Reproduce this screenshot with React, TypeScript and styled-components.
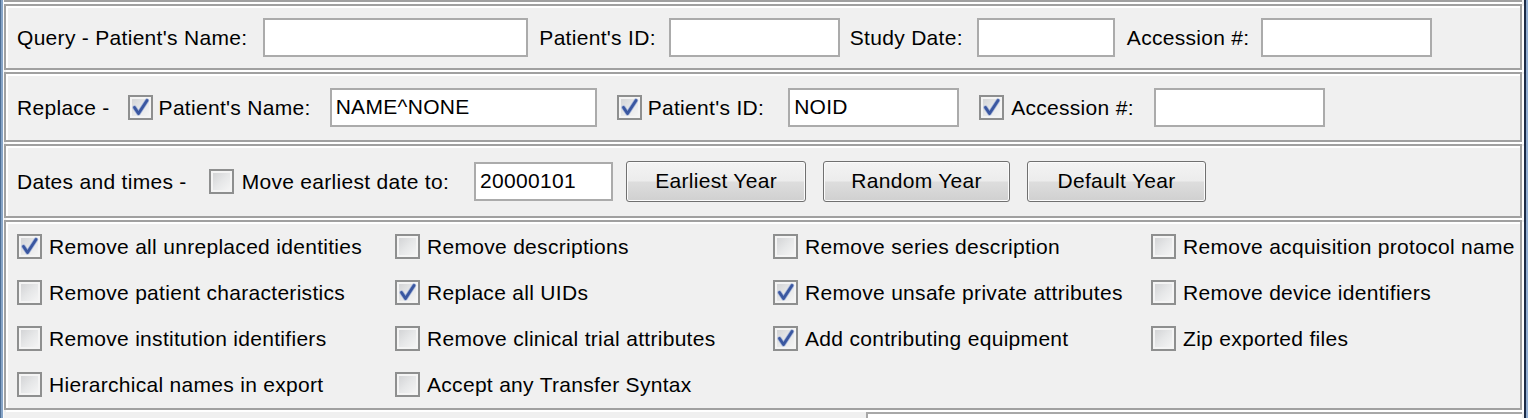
import styled, { createGlobalStyle } from 'styled-components';

const GlobalStyle = createGlobalStyle`
  html, body {
    margin: 0;
    padding: 0;
  }
  body {
    background: #f0f0f0;
    font-family: "Liberation Sans", Arial, sans-serif;
    font-size: 21px;
    letter-spacing: 0.3px;
    color: #000;
    height: 418px;
    overflow: hidden;
  }
`;

const Frame = styled.div`
  height: 418px;
  border-left: 1px solid #4f6e93;
  border-right: 2px solid #93afd2;
  box-sizing: border-box;
`;

const FrameInner = styled.div`
  height: 100%;
  border-left: 2px solid #86a4c7;
  border-right: 2px solid #1c2b46;
  box-sizing: border-box;
`;

const Content = styled.div`
  height: 100%;
  border-left: 1px solid #fbfbfb;
  padding-right: 2px;
  background: #f0f0f0;
  display: flex;
  flex-direction: column;
`;

const PanelTail = styled.div`
  height: 0;
  border-bottom: 2px solid #a0a0a0;
  box-shadow: 0 2px 0 #fff;
  margin-bottom: 2px;
`;

const Panel = styled.div<{ $h: number }>`
  box-sizing: border-box;
  height: ${(p) => p.$h}px;
  border: 2px solid #a0a0a0;
  box-shadow: inset 2px 2px 0 #fff, 2px 2px 0 #fff;
  margin-bottom: 2px;
  padding-left: 11px;
  display: flex;
  align-items: center;
  flex-shrink: 0;
`;

const Row = styled.div`
  display: flex;
  align-items: center;
  white-space: nowrap;
`;

const Label = styled.span<{ $ml?: number }>`
  margin-left: ${(p) => p.$ml ?? 0}px;
  line-height: 1;
`;

const Field = styled.input<{ $w: number; $ml?: number }>`
  box-sizing: border-box;
  width: ${(p) => p.$w}px;
  height: 39px;
  margin: 0 0 0 ${(p) => p.$ml ?? 0}px;
  border: 2px solid #ababab;
  background: #fff;
  padding: 0 4px;
  font: inherit;
  letter-spacing: inherit;
  color: #000;
  outline: none;
`;

const Button = styled.button<{ $w: number; $ml?: number }>`
  box-sizing: border-box;
  width: ${(p) => p.$w}px;
  height: 41px;
  margin: 0 0 0 ${(p) => p.$ml ?? 0}px;
  border: 1px solid #707070;
  border-radius: 3px;
  box-shadow: inset 0 0 0 1px #fbfbfb;
  background: linear-gradient(#f3f3f3 0%, #ececec 48%, #dddddd 52%, #d0d0d0 100%);
  font: inherit;
  letter-spacing: inherit;
  color: #000;
  padding: 0;
`;

const Box = styled.span<{ $ml?: number }>`
  box-sizing: border-box;
  display: inline-flex;
  align-items: center;
  justify-content: center;
  width: 25px;
  height: 25px;
  margin-left: ${(p) => p.$ml ?? 0}px;
  border: 2px solid #8e8f8f;
  box-shadow: inset 0 0 0 2px #f4f4f4;
  background: linear-gradient(135deg, #cfd0d2 0%, #e6e7e8 50%, #f7f7f7 100%);
  flex-shrink: 0;
`;

const OptionGrid = styled.div`
  display: grid;
  grid-template-columns: repeat(4, 378px);
  grid-auto-rows: 46px;
  align-items: center;
`;

const Option = styled.div`
  display: flex;
  align-items: center;
  gap: 7px;
  white-space: nowrap;
`;

const Bottom = styled.div`
  display: flex;
  flex: 1;
`;

const BottomLeft = styled.div`
  width: 862px;
  flex-shrink: 0;
`;

const BottomBox = styled.div`
  flex: 1;
  background: #fff;
  border-top: 2px solid #a8a8a8;
  border-left: 2px solid #a8a8a8;
`;

function Check({ checked, ml }: { checked?: boolean; ml?: number }) {
  return (
    <Box $ml={ml}>
      {checked && (
        <svg width="19" height="19" viewBox="0 0 19 19">
          <path
            d="M3.5 9.5 L7.5 15.5 L16 2.5"
            fill="none"
            stroke="#a3b3d8"
            strokeWidth="4.2"
            strokeLinecap="round"
            strokeLinejoin="round"
          />
          <path
            d="M3.5 9.5 L7.5 15.5 L16 2.5"
            fill="none"
            stroke="#3a57a0"
            strokeWidth="2.8"
            strokeLinecap="round"
            strokeLinejoin="round"
          />
        </svg>
      )}
    </Box>
  );
}

const options: [string, boolean][] = [
  ['Remove all unreplaced identities', true],
  ['Remove descriptions', false],
  ['Remove series description', false],
  ['Remove acquisition protocol name', false],
  ['Remove patient characteristics', false],
  ['Replace all UIDs', true],
  ['Remove unsafe private attributes', true],
  ['Remove device identifiers', false],
  ['Remove institution identifiers', false],
  ['Remove clinical trial attributes', false],
  ['Add contributing equipment', true],
  ['Zip exported files', false],
  ['Hierarchical names in export', false],
  ['Accept any Transfer Syntax', false],
];

export default function App() {
  return (
    <>
      <GlobalStyle />
      <Frame>
        <FrameInner>
          <Content>
            <PanelTail />
            <Panel $h={66}>
              <Row>
                <Label>Query - Patient's Name:</Label>
                <Field $w={265} $ml={16} readOnly value="" />
                <Label $ml={11}>Patient's ID:</Label>
                <Field $w={171} $ml={13} readOnly value="" />
                <Label $ml={10}>Study Date:</Label>
                <Field $w={138} $ml={14} readOnly value="" />
                <Label $ml={12}>Accession #:</Label>
                <Field $w={171} $ml={11} readOnly value="" />
              </Row>
            </Panel>
            <Panel $h={70}>
              <Row>
                <Label>Replace -</Label>
                <Check checked ml={18} />
                <Label $ml={6}>Patient's Name:</Label>
                <Field $w={267} $ml={19} readOnly value="NAME^NONE" />
                <Check checked ml={20} />
                <Label $ml={6}>Patient's ID:</Label>
                <Field $w={171} $ml={24} readOnly value="NOID" />
                <Check checked ml={20} />
                <Label $ml={7}>Accession #:</Label>
                <Field $w={171} $ml={20} readOnly value="" />
              </Row>
            </Panel>
            <Panel $h={74}>
              <Row>
                <Label>Dates and times -</Label>
                <Check ml={22} />
                <Label $ml={8}>Move earliest date to:</Label>
                <Field $w={139} $ml={25} readOnly value="20000101" />
                <Button $w={180} $ml={13}>Earliest Year</Button>
                <Button $w={187} $ml={17}>Random Year</Button>
                <Button $w={179} $ml={17}>Default Year</Button>
              </Row>
            </Panel>
            <Panel $h={190}>
              <OptionGrid>
                {options.map(([text, on]) => (
                  <Option key={text}>
                    <Check checked={on} />
                    <Label>{text}</Label>
                  </Option>
                ))}
              </OptionGrid>
            </Panel>
            <Bottom>
              <BottomLeft />
              <BottomBox />
            </Bottom>
          </Content>
        </FrameInner>
      </Frame>
    </>
  );
}
